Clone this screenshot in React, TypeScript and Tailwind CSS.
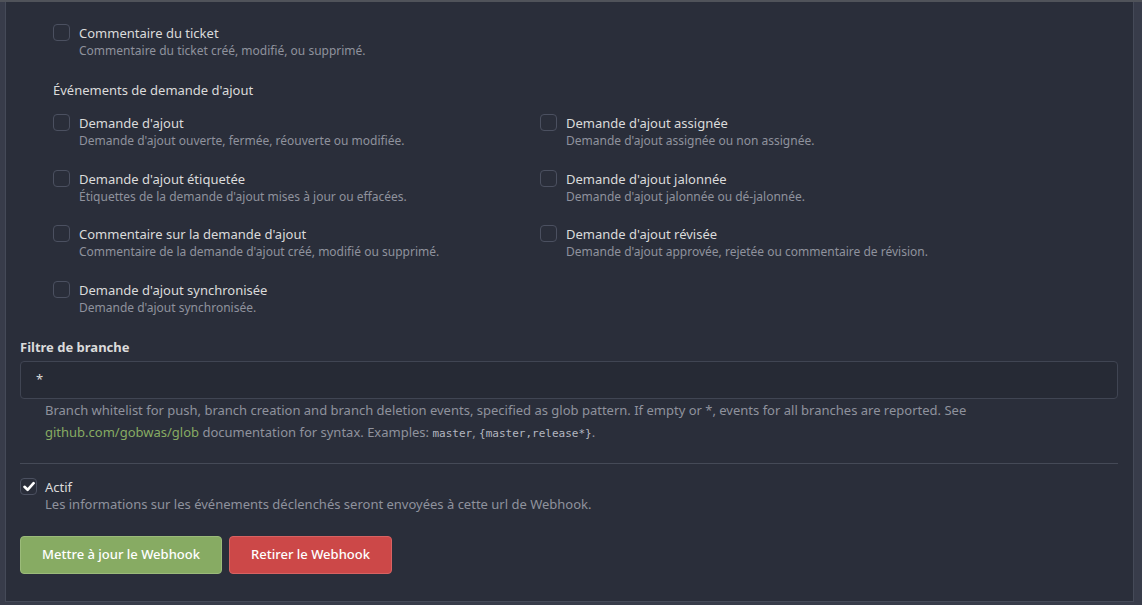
import React from "react";

const font = { fontFamily: '"Noto Sans", "Open Sans", sans-serif' };

function Box({ checked = false }: { checked?: boolean }) {
  return (
    <div className="w-[17px] h-[17px] shrink-0 rounded-[4px] border border-[#4b5060] bg-[#2a2e3a] flex items-center justify-center">
      {checked && (
        <svg width="12" height="11" viewBox="0 0 12 11">
          <path d="M1.5 5.8 L4.6 8.8 L10.6 2.2" fill="none" stroke="#ffffff" strokeWidth="2.6" strokeLinecap="round" strokeLinejoin="round" />
        </svg>
      )}
    </div>
  );
}

function Item({ title, help, checked = false }: { title: string; help: string; checked?: boolean }) {
  return (
    <div className="flex h-[36px]">
      <Box checked={checked} />
      <div className="ml-[9px]">
        <div className="text-[13px] leading-[18px] text-[#dbdbdb]">{title}</div>
        <div className="text-[12px] leading-[17px] text-[#8f929d]">{help}</div>
      </div>
    </div>
  );
}

export default function App() {
  return (
    <div className="w-[1142px] h-[605px] bg-[#383c4a] overflow-hidden border-t-2 border-[#50535a]" style={font}>
      <div className="ml-[5px] w-[1129px] h-[600px] border-x border-b border-[#454a58] bg-[#2a2e3a] pl-[14px] pr-[15px] pt-[22px]">
        <div className="pl-[33px]">
          <Item title="Commentaire du ticket" help="Commentaire du ticket créé, modifié, ou supprimé." />
          <div className="mt-[21px] text-[13px] leading-[18px] text-[#dbdbdb]">Événements de demande d'ajout</div>
          <div className="mt-[15px] grid grid-cols-[487px_1fr] gap-y-[19.67px]">
            <Item title="Demande d'ajout" help="Demande d'ajout ouverte, fermée, réouverte ou modifiée." />
            <Item title="Demande d'ajout assignée" help="Demande d'ajout assignée ou non assignée." />
            <Item title="Demande d'ajout étiquetée" help="Étiquettes de la demande d'ajout mises à jour ou effacées." />
            <Item title="Demande d'ajout jalonnée" help="Demande d'ajout jalonnée ou dé-jalonnée." />
            <Item title="Commentaire sur la demande d'ajout" help="Commentaire de la demande d'ajout créé, modifié ou supprimé." />
            <Item title="Demande d'ajout révisée" help="Demande d'ajout approvée, rejetée ou commentaire de révision." />
            <Item title="Demande d'ajout synchronisée" help="Demande d'ajout synchronisée." />
          </div>
        </div>
        <div className="mt-[21px] text-[13px] leading-[18px] font-bold text-[#dbdbdb]">Filtre de branche</div>
        <div className="mt-[5px] h-[38px] rounded-[4px] border border-[#404553] bg-[#262a35] flex items-center px-[15px] text-[13px] text-[#dbdbdb]">
          *
        </div>
        <div className="pl-[25px] text-[13px] leading-[22px] text-[#8f929d]">
          Branch whitelist for push, branch creation and branch deletion events, specified as glob pattern. If empty or <span>*</span>, events for all branches are reported. See{" "}
          <br />
          <span className="text-[#87ab63]">github.com/gobwas/glob</span> documentation for syntax. Examples:{" "}
          <code className="text-[11px] text-[#b4b7c0]" style={{ fontFamily: '"DejaVu Sans Mono", monospace' }}>master</code>,{" "}
          <code className="text-[11px] text-[#b4b7c0]" style={{ fontFamily: '"DejaVu Sans Mono", monospace' }}>{"{master,release*}"}</code>.
        </div>
        <div className="mt-[18px] border-t border-[#454a57]" />
        <div className="mt-[14px] flex h-[36px]">
          <Box checked />
          <div className="ml-[8px]">
            <div className="text-[13px] leading-[18px] text-[#dbdbdb]">Actif</div>
            <div className="text-[13px] leading-[17px] text-[#8f929d]">Les informations sur les événements déclenchés seront envoyées à cette url de Webhook.</div>
          </div>
        </div>
        <div className="mt-[22px] flex gap-[7px]">
          <button className="h-[38px] w-[202px] rounded-[4px] bg-[#87ab63] border border-[#9bbb7a] text-white text-[13px] font-medium">Mettre à jour le Webhook</button>
          <button className="h-[38px] w-[163px] rounded-[4px] bg-[#cc4848] border border-[#d86262] text-white text-[13px] font-medium">Retirer le Webhook</button>
        </div>
      </div>
    </div>
  );
}
